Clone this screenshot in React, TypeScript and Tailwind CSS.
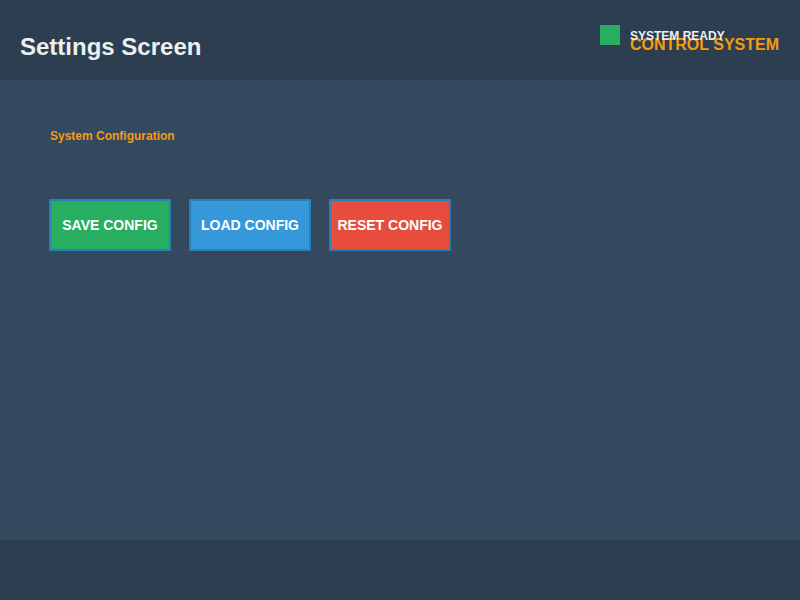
export default function App() {
    return (
        <div className="relative flex h-[600px] w-full flex-col bg-[#34495e] font-['Liberation_Sans',Arial,sans-serif]">
            {/* Header */}
            <header className="flex h-20 items-start justify-between bg-[#2c3e50] pr-[21px] pl-5">
                <h1 className="pt-[33px] text-[24px] leading-[28px] font-bold text-[#ecf0f1]">Settings Screen</h1>
                <div className="pt-[36px] text-[16px] leading-[18px] font-bold text-[#f39c12]">CONTROL SYSTEM</div>
            </header>

            {/* Status indicator overlay */}
            <div className="absolute top-[25px] left-[600px] flex items-center gap-[10px]">
                <div className="h-5 w-5 bg-[#27ae60]" />
                <span className="pt-[2px] text-[12px] leading-[14px] font-bold text-[#ecf0f1]">SYSTEM READY</span>
            </div>

            {/* Main */}
            <main className="flex-1 px-[49px] pt-[49px]">
                <h2 className="pl-px text-[12px] leading-[14px] font-bold text-[#f39c12]">System Configuration</h2>
                <div className="mt-[56px] flex gap-[18px]">
                    <button className="h-[52px] w-[122px] border-2 border-[#2980b9] bg-[#27ae60] text-[14px] font-bold text-white">
                        SAVE CONFIG
                    </button>
                    <button className="h-[52px] w-[122px] border-2 border-[#2980b9] bg-[#3498db] text-[14px] font-bold text-white">
                        LOAD CONFIG
                    </button>
                    <button className="h-[52px] w-[122px] border-2 border-[#2980b9] bg-[#e74c3c] text-[14px] font-bold text-white">
                        RESET CONFIG
                    </button>
                </div>
            </main>

            {/* Footer */}
            <footer className="h-[60px] bg-[#2c3e50]" />
        </div>
    );
}
